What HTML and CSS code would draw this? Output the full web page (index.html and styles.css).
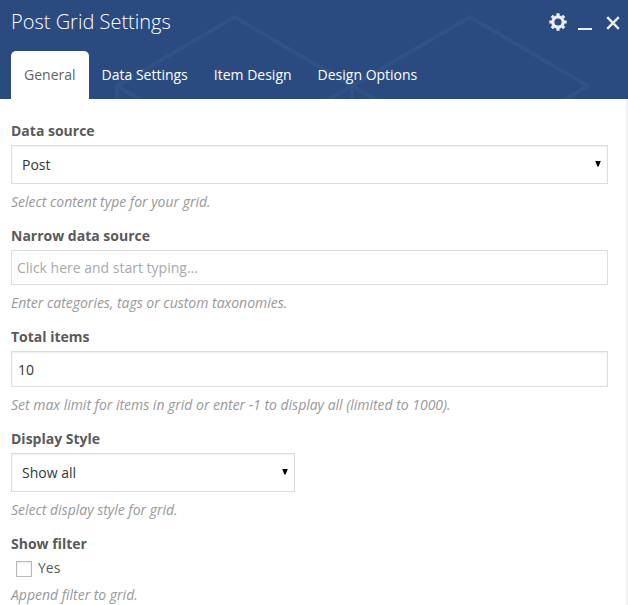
FILE: index.html
```html
<!DOCTYPE html>
<html lang="en">
<head>
<meta charset="utf-8">
<title>Post Grid Settings</title>
<link rel="stylesheet" href="styles.css">
</head>
<body>
<div class="panel">
  <header class="header">
    <svg class="pattern" width="628" height="99" viewBox="0 0 628 99" aria-hidden="true">
      <path d="M140 99.500L117 86L234.500 17L352 86L470 17L588 86L564 100M117 86V99M352 86V99M328 100L352 86L376 100"/>
    </svg>
    <div class="titlebar">
      <h1 class="title">Post Grid Settings</h1>
      <div class="controls">
        <svg class="gear" width="18" height="18" viewBox="-9 -9 18 18">
          <circle class="ring" r="5.200"/>
          <path class="teeth" d="M0 -6V-8.700M0 6V8.700M-6 0H-8.700M6 0H8.700M-4.400 -4.400L-6.200 -6.200M4.400 -4.400L6.200 -6.200M-4.400 4.400L-6.200 6.200M4.400 4.400L6.200 6.200"/>
        </svg>
        <span class="minimize"></span>
        <svg class="close" width="14" height="14" viewBox="0 0 14 14"><path d="M1.200 1.200L12.800 12.800M12.800 1.200L1.200 12.800"/></svg>
      </div>
    </div>
    <nav class="tabs">
      <span class="tab active">General</span>
      <span class="tab">Data Settings</span>
      <span class="tab">Item Design</span>
      <span class="tab">Design Options</span>
    </nav>
  </header>
  <main class="content">
    <section class="field">
      <div class="label">Data source</div>
      <div class="control select">Post<span class="arrow"></span></div>
      <div class="hint">Select content type for your grid.</div>
    </section>
    <section class="field">
      <div class="label">Narrow data source</div>
      <div class="control autocomplete"><span class="typing">Click here and start typing...</span></div>
      <div class="hint">Enter categories, tags or custom taxonomies.</div>
    </section>
    <section class="field">
      <div class="label">Total items</div>
      <div class="control text">10</div>
      <div class="hint">Set max limit for items in grid or enter -1 to display all (limited to 1000).</div>
    </section>
    <section class="field">
      <div class="label">Display Style</div>
      <div class="control select half">Show all<span class="arrow"></span></div>
      <div class="hint">Select display style for grid.</div>
    </section>
    <section class="field">
      <div class="label">Show filter</div>
      <div class="check"><span class="box"></span><span class="yes">Yes</span></div>
      <div class="hint">Append filter to grid.</div>
    </section>
  </main>
</div>
</body>
</html>
```
FILE: styles.css
```css
* { box-sizing: border-box; }
body {
  margin: 0;
  background: #fff;
  font: 14px/20px "Open Sans", sans-serif;
  color: #32373c;
}
.panel { width: 628px; height: 605px; overflow: hidden; }
.header {
  position: relative;
  height: 99px;
  background: #2b4b80;
  color: #fff;
  display: flex;
  flex-direction: column;
  justify-content: space-between;
}
.pattern { position: absolute; left: 0; top: 0; }
.pattern path { fill: none; stroke: #315287; stroke-width: 4; }
.titlebar {
  position: relative;
  height: 44px;
  padding: 0 8px 0 11px;
  display: flex;
  justify-content: space-between;
}
.title { margin: 0; font-size: 20px; line-height: 43px; font-weight: 300; }
.controls { display: flex; align-items: flex-start; }
.gear { margin: 13px 11.500px 0 0; }
.ring { fill: none; stroke: #e9edf2; stroke-width: 3.200; }
.teeth { fill: none; stroke: #e9edf2; stroke-width: 3.200; }
.minimize { width: 14px; height: 2px; margin: 28px 14px 0 0; background: #e9edf2; }
.close { margin-top: 16px; }
.close path { fill: none; stroke: #e9edf2; stroke-width: 2.400; }
.tabs { position: relative; display: flex; height: 48px; padding-left: 11px; }
.tab { padding: 0 13px; line-height: 48px; white-space: nowrap; }
.active { background: #fff; color: #5f6468; border-radius: 5px 5px 0 0; }
.content {
  height: 506px;
  padding: 22px 18px 0 11px;
  border-right: 2px solid #f1f1f1;
  display: flex;
  flex-direction: column;
  gap: 14px;
}
.label { margin-bottom: 4px; font-weight: 700; color: #5a5a5a; }
.hint { margin-top: 8px; font-style: italic; letter-spacing: -.015px; color: #999; white-space: nowrap; }
.control {
  border: 1px solid #ddd;
  box-shadow: inset 0 1px 2px rgba(0, 0, 0, .07);
  display: flex;
  align-items: center;
}
.select { height: 39px; padding: 0 6px 0 10px; justify-content: space-between; }
.half { width: 284px; }
.arrow { width: 6px; height: 6px; background: #000; clip-path: polygon(0 0, 100% 0, 60% 100%, 40% 100%); margin-bottom: 2px; }
.autocomplete { height: 35px; padding: 3px 0 3px 5px; box-shadow: none; }
.typing {
  flex: 1;
  height: 29px;
  line-height: 30px;
  color: #a9a9a9;
  box-shadow: inset 1px 1px 2px rgba(0, 0, 0, .04);
}
.text { height: 36px; padding: 1px 6px 0; }
.check { height: 19px; padding-left: 5px; display: flex; align-items: flex-end; }
.box { width: 16px; height: 16px; border: 1px solid #b4b9be; box-shadow: inset 0 1px 2px rgba(0, 0, 0, .1); }
.yes { margin: 0 0 -1px 6px; color: #5a5a5a; }
```
